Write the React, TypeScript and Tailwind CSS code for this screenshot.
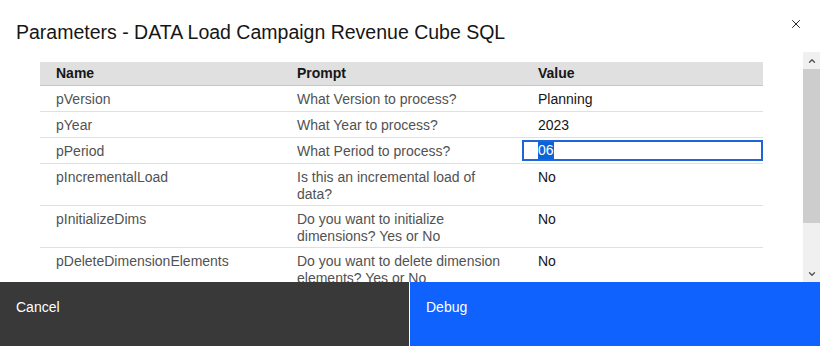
import { X, ChevronUp, ChevronDown } from "lucide-react"

const rows = [
  { name: "pVersion", prompt: "What Version to process?", value: "Planning" },
  { name: "pYear", prompt: "What Year to process?", value: "2023" },
  { name: "pPeriod", prompt: "What Period to process?", value: "06", editing: true },
  { name: "pIncrementalLoad", prompt: "Is this an incremental load of data?", value: "No" },
  { name: "pInitializeDims", prompt: "Do you want to initialize dimensions? Yes or No", value: "No" },
  { name: "pDeleteDimensionElements", prompt: "Do you want to delete dimension elements? Yes or No", value: "No" },
  { name: "pSkipCheck", prompt: "Do you want to skip checks?", value: "No" },
]

const cell = "pl-4 pr-2 pt-[5px] pb-[2px] min-h-[26px] border-b border-[#e0e0e0]"

export default function App() {
  return (
    <div
      className="w-[820px] h-[346px] bg-white flex flex-col overflow-hidden text-[#161616]"
      style={{ fontFamily: '"Liberation Sans", Arial, sans-serif' }}
    >
      {/* Header */}
      <div className="h-[52px] shrink-0 flex items-start justify-between pl-4 pr-4 pt-[20px]">
        <h1 className="text-[19.5px] leading-[24px] font-normal">
          Parameters - DATA Load Campaign Revenue Cube SQL
        </h1>
        <button className="-mt-[4px] w-4 h-4 flex items-center justify-center text-[#161616]">
          <X className="w-[14px] h-[14px]" strokeWidth={1.6} />
        </button>
      </div>

      {/* Body */}
      <div className="flex-1 flex min-h-0">
        <div className="flex-1 overflow-hidden pt-[10px] px-10">
          <div className="grid grid-cols-[241px_241px_241px] text-[14px] leading-[17px]">
            <div className="contents font-bold">
              <div className="bg-[#e0e0e0] pl-4 py-[3px] border-b border-[#c6c6c6]">Name</div>
              <div className="bg-[#e0e0e0] pl-4 py-[3px] border-b border-[#c6c6c6]">Prompt</div>
              <div className="bg-[#e0e0e0] pl-4 py-[3px] border-b border-[#c6c6c6]">Value</div>
            </div>
            {rows.map((r) => (
              <div key={r.name} className="contents">
                <div className={`${cell} text-[#525252]`}>{r.name}</div>
                <div className={`${cell} text-[#525252]`}>{r.prompt}</div>
                {r.editing ? (
                  <div className="border-b border-[#e0e0e0] pt-[2px] pb-[1px]">
                    <div className="h-[21px] border-2 border-[#1f65d6] pl-[14px] flex items-center">
                      <span className="bg-[#0a64d8] text-white leading-[17px]">{r.value}</span>
                    </div>
                  </div>
                ) : (
                  <div className={`${cell} text-[#161616]`}>{r.value}</div>
                )}
              </div>
            ))}
          </div>
        </div>

        {/* Scrollbar */}
        <div className="w-[17px] shrink-0 bg-[#f0f0f0] flex flex-col">
          <div className="h-[17px] flex items-center justify-center text-[#505050]">
            <ChevronUp className="w-[10px] h-[10px]" strokeWidth={3} />
          </div>
          <div className="h-[154px] bg-[#cdcdcd]" />
          <div className="flex-1" />
          <div className="h-[17px] flex items-center justify-center text-[#505050]">
            <ChevronDown className="w-[10px] h-[10px]" strokeWidth={3} />
          </div>
        </div>
      </div>

      {/* Footer */}
      <div className="h-[64px] shrink-0 flex text-[14px] text-white">
        <button className="w-[409px] bg-[#393939] text-left px-4 pt-[15px] flex items-start">
          Cancel
        </button>
        <div className="w-px bg-white" />
        <button className="flex-1 bg-[#0f62fe] text-left px-4 pt-[15px] flex items-start">
          Debug
        </button>
      </div>
    </div>
  )
}
